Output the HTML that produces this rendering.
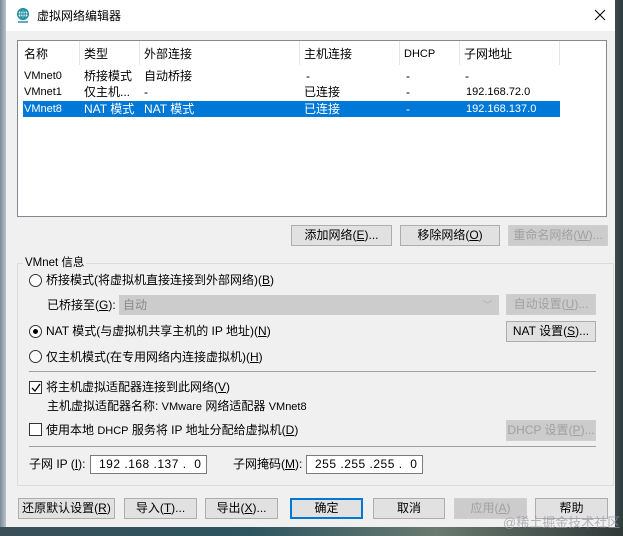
<!DOCTYPE html>
<html><head><meta charset="utf-8"><style>
*{margin:0;padding:0;box-sizing:border-box}
body{width:623px;height:536px;overflow:hidden;background:linear-gradient(90deg,#7a8c98 0,#b9c3c8 6px,#3c4a4c 615px,#2f3c3c 623px);font-family:"Liberation Sans","Noto Sans CJK SC",sans-serif;font-size:12px;color:#000;position:relative}
.bot{position:absolute;left:0;top:527px;width:623px;height:9px;background:linear-gradient(90deg,#3a4f58,#2d5560 40%,#6a7a70 70%,#303838)}
.win{position:absolute;left:6px;top:0;width:609px;height:527px;background:#f0f0f0}
.title{position:absolute;left:0;top:0;width:609px;height:31px;background:#fff}
.a{position:absolute;white-space:nowrap;line-height:16px}
.btn{position:absolute;height:21px;border:1px solid #adadad;background:#e1e1e1;text-align:center;line-height:19px;white-space:nowrap}
.dis{color:#a0a0a0;border-color:#cfcfcf;background:#ccc}
.list{position:absolute;left:11px;top:40px;width:590px;height:177px;background:#fff;border:1px solid #828790}
.hd{position:absolute;top:0;height:24px;border-right:1px solid #e5e5e5}
.radio{position:absolute;width:13px;height:13px;border:1px solid #333;border-radius:50%;background:#fff}
.chk{position:absolute;width:13px;height:13px;border:1px solid #333;background:#fff}
.inp{position:absolute;height:19px;border:1px solid #7a7a7a;background:#fff;line-height:17px;padding-left:8px;letter-spacing:.5px}
.sep{position:absolute;height:1px;background:#a0a0a0}
</style></head><body>
<div class="bot"></div>
<div class="win">
<div class="title">
<svg style="position:absolute;left:10px;top:8px" width="14" height="15" viewBox="0 0 14 15"><circle cx="7" cy="6" r="5.3" fill="none" stroke="#1a8aa0" stroke-width="1.4"/><path d="M1.7 6h10.6M7 .7v10.6M3.2 3h7.6M3.2 9h7.6" stroke="#1a8aa0" stroke-width="1"/><ellipse cx="7" cy="6" rx="2.3" ry="5.3" fill="none" stroke="#1a8aa0"/><path d="M2 14h10" stroke="#1a8aa0" stroke-width="1.4"/></svg>
<div class="a" style="left:31px;top:8px;font-size:12px">虚拟网络编辑器</div>
<svg style="position:absolute;left:588px;top:9px" width="12" height="12"><path d="M1 1L11 11M11 1L1 11" stroke="#000" stroke-width="1"/></svg>
</div>
<div class="list">
<div class="hd" style="left:0;width:62px"></div><div class="hd" style="left:62px;width:60px"></div><div class="hd" style="left:122px;width:160px"></div><div class="hd" style="left:282px;width:100px"></div><div class="hd" style="left:382px;width:60px"></div><div class="hd" style="left:442px;width:100px"></div>
<div style="position:absolute;left:5px;top:60px;width:537px;height:16px;background:#0078d7"></div>
<div class="a" style="left:6px;top:5px">名称</div><div class="a" style="left:66px;top:5px">类型</div><div class="a" style="left:126px;top:5px">外部连接</div><div class="a" style="left:286px;top:5px">主机连接</div><div class="a" style="left:386px;top:5px;font-size:11px">DHCP</div><div class="a" style="left:446px;top:5px">子网地址</div>
<div class="a" style="left:6px;top:27px;font-size:11px">VMnet0</div><div class="a" style="left:66px;top:27px">桥接模式</div><div class="a" style="left:126px;top:27px">自动桥接</div><div class="a" style="left:288px;top:27px">-</div><div class="a" style="left:388px;top:27px">-</div><div class="a" style="left:447px;top:27px">-</div>
<div class="a" style="left:6px;top:43px;font-size:11px">VMnet1</div><div class="a" style="left:66px;top:43px">仅主机...</div><div class="a" style="left:126px;top:43px">-</div><div class="a" style="left:286px;top:43px">已连接</div><div class="a" style="left:388px;top:43px">-</div><div class="a" style="left:448px;top:43px;font-size:11px">192.168.72.0</div>
<div style="color:#fff"><div class="a" style="left:6px;top:60px;font-size:11px">VMnet8</div><div class="a" style="left:66px;top:60px">NAT 模式</div><div class="a" style="left:126px;top:60px">NAT 模式</div><div class="a" style="left:286px;top:60px">已连接</div><div class="a" style="left:388px;top:60px">-</div><div class="a" style="left:448px;top:60px;font-size:11px">192.168.137.0</div></div>
</div>
<div class="btn" style="left:285px;top:225px;width:101px">添加网络(<u>E</u>)...</div>
<div class="btn" style="left:394px;top:225px;width:100px">移除网络(<u>O</u>)</div>
<div class="btn dis" style="left:502px;top:225px;width:100px">重命名网络(<u>W</u>)...</div>
<div style="position:absolute;left:11px;top:263px;width:597px;height:223px;border:1px solid #dcdcdc"></div>
<div class="a" style="left:17px;top:255px;background:#f0f0f0;padding:0 2px;font-size:11.5px">VMnet 信息</div>
<div class="radio" style="left:23px;top:274px"></div><div class="a" style="left:40px;top:272px">桥接模式(将虚拟机直接连接到外部网络)(<u>B</u>)</div>
<div class="a" style="left:41px;top:297px">已桥接至(<u>G</u>):</div>
<div style="position:absolute;left:113px;top:295px;width:380px;height:20px;background:#ccc;border:1px solid #ccc;color:#8a8a8a;line-height:18px;padding-left:3px">自动<span style="position:absolute;right:6px;color:#aaa;font-size:9px">﹀</span></div>
<div class="btn dis" style="left:500px;top:294px;width:90px">自动设置(<u>U</u>)...</div>
<div class="radio" style="left:23px;top:325px"></div><div style="position:absolute;left:27px;top:329px;width:5px;height:5px;border-radius:50%;background:#000"></div>
<div class="a" style="left:40px;top:323px">NAT 模式(与虚拟机共享主机的 IP 地址)(<u>N</u>)</div>
<div class="btn" style="left:500px;top:321px;width:90px">NAT 设置(<u>S</u>)...</div>
<div class="radio" style="left:23px;top:350px"></div><div class="a" style="left:40px;top:349px">仅主机模式(在专用网络内连接虚拟机)(<u>H</u>)</div>
<div class="sep" style="left:23px;top:371px;width:567px"></div>
<div class="chk" style="left:23px;top:381px"></div><svg style="position:absolute;left:25px;top:383px" width="10" height="10"><path d="M1 5l3 3 5-7" fill="none" stroke="#000" stroke-width="1.3"/></svg>
<div class="a" style="left:40px;top:379px">将主机虚拟适配器连接到此网络(<u>V</u>)</div>
<div class="a" style="left:41px;top:398px">主机虚拟适配器名称: <span style="font-size:11px">VMware</span> 网络适配器 <span style="font-size:11px">VMnet8</span></div>
<div class="chk" style="left:23px;top:423px"></div><div class="a" style="left:40px;top:422px">使用本地 <span style="font-size:11px">DHCP</span> 服务将 IP 地址分配给虚拟机(<u>D</u>)</div>
<div class="btn dis" style="left:500px;top:420px;width:90px">DHCP 设置(<u>P</u>)...</div>
<div class="sep" style="left:23px;top:446px;width:567px"></div>
<div class="a" style="left:23px;top:456px">子网 IP (<u>I</u>):</div>
<div class="inp" style="left:84px;top:455px;width:117px">192 .168 .137 .&nbsp; 0</div>
<div class="a" style="left:227px;top:456px">子网掩码(<u>M</u>):</div>
<div class="inp" style="left:300px;top:455px;width:117px">255 .255 .255 .&nbsp; 0</div>
<div class="btn" style="left:12px;top:498px;width:97px">还原默认设置(<u>R</u>)</div>
<div class="btn" style="left:118px;top:498px;width:73px">导入(<u>T</u>)...</div>
<div class="btn" style="left:199px;top:498px;width:73px">导出(<u>X</u>)...</div>
<div class="btn" style="left:284px;top:498px;width:73px;border:2px solid #0078d7;line-height:17px">确定</div>
<div class="btn" style="left:367px;top:498px;width:72px">取消</div>
<div class="btn dis" style="left:448px;top:498px;width:73px">应用(<u>A</u>)</div>
<div class="btn" style="left:529px;top:498px;width:73px">帮助</div>
</div>
<div class="a" style="left:503px;top:515px;color:rgba(150,150,160,.7);font-size:13px">@稀土掘金技术社区</div>
</body></html>
